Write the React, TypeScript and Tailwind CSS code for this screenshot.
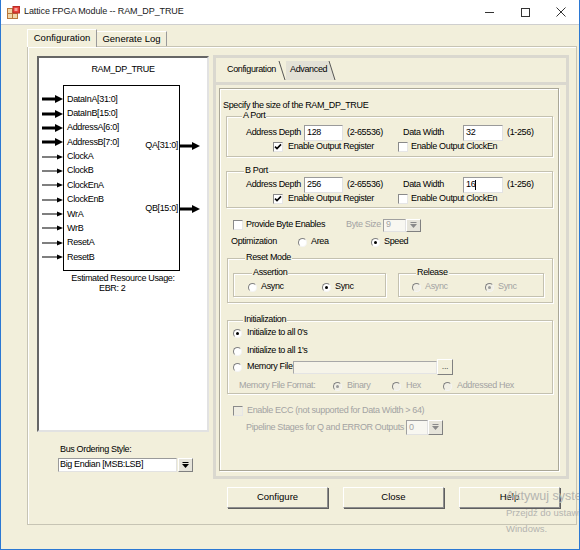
import React from 'react';

const BG = 'bg-[#f2efdb]';

function Check({ checked = false, disabled = false }: { checked?: boolean; disabled?: boolean }) {
  return (
    <span className={`w-[10px] h-[10px] shrink-0 border border-t-[#8a8a8a] border-l-[#8a8a8a] border-b-[#e6e6e6] border-r-[#e6e6e6] flex items-center justify-center ${disabled ? 'bg-[#efede2]' : 'bg-white'}`}>
      {checked && (
        <svg width="8" height="8" viewBox="0 0 8 8">
          <path d="M1 3.6 L3 5.6 L7 1.4" stroke="#000" strokeWidth="1.6" fill="none" />
        </svg>
      )}
    </span>
  );
}

function Radio({ on = false, disabled = false }: { on?: boolean; disabled?: boolean }) {
  return (
    <span className={`w-[9px] h-[9px] shrink-0 rounded-full border border-t-[#808080] border-l-[#808080] border-b-[#f4f4f4] border-r-[#f4f4f4] flex items-center justify-center ${disabled ? 'bg-[#f1efe4]' : 'bg-white'}`}>
      {on && <span className={`w-[3px] h-[3px] rounded-full ${disabled ? 'bg-[#9a9a9a]' : 'bg-black'}`} />}
    </span>
  );
}

function DropBtn({ disabled = false }: { disabled?: boolean }) {
  const c = disabled ? '#8a8a8a' : '#000';
  return (
    <span className="w-[15px] h-full shrink-0 bg-[#e6e4da] border border-t-white border-l-white border-r-[#808080] border-b-[#808080] flex items-center justify-center">
      <svg width="9" height="7" viewBox="0 0 9 7">
        <path d="M1.5 0.5 H7.5" stroke={c} strokeWidth="1" />
        <path d="M1 2 L8 2 L4.5 6 Z" fill={c} />
      </svg>
    </span>
  );
}

function GroupBox({ title, left = 16, className = '', children }: { title: string; left?: number; className?: string; children?: React.ReactNode }) {
  return (
    <div className={`relative shrink-0 border border-[#c4c1b0] shadow-[inset_1px_1px_0_#fff,1px_1px_0_#fff] ${className}`}>
      <span
        className={`absolute top-[-7px] px-[1px] leading-[11px] ${BG} ${left === 18 ? 'left-[17px]' : left === 19 ? 'left-[18px]' : 'left-[15px]'}`}
      >
        {title}
      </span>
      {children}
    </div>
  );
}

function PinArrow({ bus }: { bus: boolean }) {
  return bus ? (
    <svg width="21" height="9" viewBox="0 0 21 9" className="block">
      <rect x="0" y="3" width="15" height="3" fill="#000" />
      <path d="M13 0.5 L21 4.5 L13 8.5 Z" fill="#000" />
    </svg>
  ) : (
    <svg width="21" height="9" viewBox="0 0 21 9" className="block">
      <rect x="0" y="4" width="16" height="1" fill="#000" />
      <path d="M15 2 L21 4.5 L15 7 Z" fill="#000" />
    </svg>
  );
}

const PINS: [string, boolean][] = [
  ['DataInA[31:0]', true],
  ['DataInB[15:0]', true],
  ['AddressA[6:0]', true],
  ['AddressB[7:0]', true],
  ['ClockA', false],
  ['ClockB', false],
  ['ClockEnA', false],
  ['ClockEnB', false],
  ['WrA', false],
  ['WrB', false],
  ['ResetA', false],
  ['ResetB', false],
];

function PortGroup({ title, depth, width, top, caret }: { title: string; depth: string; width: string; top: 'a' | 'b'; caret?: boolean }) {
  return (
    <GroupBox title={title} left={top === 'a' ? 16 : 18} className={`ml-[6px] w-[327px] ${top === 'a' ? 'mt-[5px] h-[41px] pt-[8px]' : 'mt-[14px] h-[37px] pt-[5px]'}`}>
      <div className="h-[16px] flex items-center pl-[19px]">
        <span className="w-[58px] shrink-0">Address Depth</span>
        <span className="w-[39px] h-[16px] shrink-0 bg-white border border-t-[#9a9a9a] border-l-[#9a9a9a] border-b-[#e2e2e2] border-r-[#e2e2e2] flex items-center pl-[2px]">{depth}</span>
        <span className="ml-[4px] w-[56px] shrink-0">(2-65536)</span>
        <span className="w-[60px] shrink-0">Data Width</span>
        <span className="w-[40px] h-[16px] shrink-0 bg-white border border-t-[#9a9a9a] border-l-[#9a9a9a] border-b-[#e2e2e2] border-r-[#e2e2e2] flex items-center pl-[2px]">
          {width}
          {caret && <span className="w-[1px] h-[10px] bg-black" />}
        </span>
        <span className="ml-[4px]">(1-256)</span>
      </div>
      <div className="h-[12px] flex items-center pl-[46px]">
        <span className="w-[125px] shrink-0 flex items-center">
          <Check checked />
          <span className="ml-[5px]">Enable Output Register</span>
        </span>
        <Check />
        <span className="ml-[3px]">Enable Output ClockEn</span>
      </div>
    </GroupBox>
  );
}

export default function App() {
  const dim = 'text-[#a3a3a3]';
  return (
    <div className={`w-[580px] h-[550px] relative overflow-hidden flex flex-col ${BG} border-x border-b border-[#2b78d3] font-['Liberation_Sans',Arial,sans-serif] text-black`}>
      {/* title bar */}
      <div className="h-[25px] shrink-0 bg-white border-b border-[#cfcfcf] flex items-center">
        <svg width="13" height="13" viewBox="0 0 13 13" className="ml-[6px] shrink-0">
          <rect x="0.5" y="2.5" width="10" height="10" fill="#f1d6a8" stroke="#b9773a" />
          <path d="M5.5 2.5 V12.5 M0.5 7.5 H10.5" stroke="#b9773a" />
          <rect x="6" y="0.5" width="6.5" height="6.5" fill="#e8413a" stroke="#b92d26" />
          <rect x="7.5" y="2" width="3" height="3" fill="#f7a19b" />
        </svg>
        <span className="ml-[4px] text-[9px] tracking-[-0.1px] text-[#1a1a1a]">Lattice FPGA Module -- RAM_DP_TRUE</span>
        <div className="flex-1" />
        <div className="w-[36px] h-full flex items-center justify-center">
          <span className="w-[9px] h-[1px] bg-[#333]" />
        </div>
        <div className="w-[36px] h-full flex items-center justify-center">
          <span className="w-[9px] h-[9px] border border-[#333]" />
        </div>
        <div className="w-[36px] h-full flex items-center justify-center">
          <svg width="10" height="10" viewBox="0 0 10 10">
            <path d="M0.5 0.5 L9.5 9.5 M9.5 0.5 L0.5 9.5" stroke="#333" strokeWidth="1" />
          </svg>
        </div>
      </div>

      {/* body */}
      <div className="pl-[26px] pt-[4px]">
        <div className="h-[17px] flex items-end text-[9.5px]">
          <div className={`relative z-10 -mb-px h-[18px] w-[70px] ${BG} border-t border-l border-white border-r border-r-[#9a9a9a] flex items-center justify-center`}>
            Configuration
          </div>
          <div className="h-[15px] w-[70px] border-t border-t-white border-r border-r-[#9a9a9a] flex items-center justify-center pt-[1px]">
            Generate Log
          </div>
        </div>

        <div className="w-[550px] h-[479px] border border-[#c7c4b4] shadow-[inset_1px_1px_0_#fff] flex flex-col text-[9px] tracking-[-0.35px]">
          <div className="flex items-start pt-[8px] pl-[9px]">
            {/* left column */}
            <div className="w-[172px] mt-[1px] shrink-0 flex flex-col">
              <div className="h-[376px] bg-white border-2 border-t-[#666] border-l-[#666] border-r-[#e2e2e2] border-b-[#e2e2e2] flex flex-col">
                <div className="pt-[6px] leading-[11px] text-center">RAM_DP_TRUE</div>
                <div className="relative mt-[10px] ml-[24px] w-[117px] h-[186px] border border-black pt-[6px]">
                  {PINS.map(([name, bus]) => (
                    <div key={name} className="relative h-[14.36px] flex items-center pl-[3px] leading-none">
                      <span className="absolute left-[-22px] top-1/2 -translate-y-1/2">
                        <PinArrow bus={bus} />
                      </span>
                      {name}
                    </div>
                  ))}
                  <div className="absolute right-[1px] top-[54px] h-[12px] flex items-center">
                    QA[31:0]
                    <span className="absolute left-full ml-[1px] top-1/2 -translate-y-1/2">
                      <PinArrow bus />
                    </span>
                  </div>
                  <div className="absolute right-[1px] top-[117px] h-[12px] flex items-center">
                    QB[15:0]
                    <span className="absolute left-full ml-[1px] top-1/2 -translate-y-1/2">
                      <PinArrow bus />
                    </span>
                  </div>
                </div>
                <div className="mt-[2px] leading-[10px]">
                  <div className="text-center">Estimated Resource Usage:</div>
                  <div className="pl-[60px]">EBR: 2</div>
                </div>
              </div>
              <div className="mt-[12px] pl-[23px] leading-[11px]">Bus Ordering Style:</div>
              <div className="mt-[3px] pl-[21px] h-[14px] flex">
                <span className="w-[119px] h-full bg-white border border-t-[#9a9a9a] border-l-[#9a9a9a] border-b-[#e2e2e2] border-r-[#e2e2e2] flex items-center pl-[1px]">
                  Big Endian [MSB:LSB]
                </span>
                <span className="ml-[1px] h-full flex">
                  <DropBtn />
                </span>
              </div>
            </div>

            {/* right frame */}
            <div className="ml-[4px] w-[356px] h-[424px] shrink-0 border-[3px] border-[#dad8cf] flex flex-col">
              <div className="h-[27px] shrink-0 border-b-[3px] border-[#dad8cf] flex items-center pl-[11px]">
                <span>Configuration</span>
                <svg width="8" height="19" viewBox="0 0 8 19" className="ml-[2px] shrink-0">
                  <path d="M1 0 L7 19" stroke="#555" strokeWidth="1" />
                </svg>
                <span className="h-[19px] flex items-center bg-[#e3e1d6] pl-[4px] pr-[1px]">Advanced</span>
                <svg width="8" height="19" viewBox="0 0 8 19" className="shrink-0">
                  <path d="M0 19 L0 0 L7 19 Z" fill="#e3e1d6" />
                  <path d="M1 0 L7 19" stroke="#555" strokeWidth="1" />
                </svg>
              </div>

              <div className="mt-[3px] ml-[3px] w-[340px] h-[383px] border border-[#aaa797] shadow-[inset_1px_1px_0_#fff,1px_1px_0_#fff] flex flex-col">
                <div className="mt-[11px] pl-[3px] leading-[11px]">Specify the size of the RAM_DP_TRUE</div>

                <PortGroup title="A Port" depth="128" width="32" top="a" />
                <PortGroup title="B Port" depth="256" width="16" top="b" caret />

                <div className="mt-[10px] h-[14px] flex items-center pl-[13px]">
                  <span className="w-[113px] shrink-0 flex items-center">
                    <Check />
                    <span className="ml-[3px]">Provide Byte Enables</span>
                  </span>
                  <span className={`w-[37px] shrink-0 ${dim}`}>Byte Size</span>
                  <span className={`w-[23px] h-[13px] shrink-0 bg-[#f8f7f1] border border-t-[#a0a0a0] border-l-[#a0a0a0] border-b-[#e2e2e2] border-r-[#e2e2e2] flex items-center pl-[2px] ${dim}`}>9</span>
                  <span className="h-[13px] flex">
                    <DropBtn disabled />
                  </span>
                </div>

                <div className="mt-[4px] h-[12px] flex items-center pl-[11px]">
                  <span className="w-[67px] shrink-0">Optimization</span>
                  <span className="w-[73px] shrink-0 flex items-center">
                    <Radio />
                    <span className="ml-[4px]">Area</span>
                  </span>
                  <Radio on />
                  <span className="ml-[4px]">Speed</span>
                </div>

                <GroupBox title="Reset Mode" left={18} className="mt-[10px] ml-[7px] w-[326px] h-[45px] flex items-start pt-[14px] pl-[5px]">
                  <GroupBox title="Assertion" left={19} className="w-[153px] h-[24px] pt-[7px] pl-[14px]">
                    <div className="h-[12px] flex items-center">
                      <span className="w-[74px] shrink-0 flex items-center">
                        <Radio />
                        <span className="ml-[4px]">Async</span>
                      </span>
                      <Radio on />
                      <span className="ml-[4px]">Sync</span>
                    </div>
                  </GroupBox>
                  <GroupBox title="Release" left={18} className="ml-[12px] w-[146px] h-[24px] pt-[7px] pl-[13px]">
                    <div className={`h-[12px] flex items-center ${dim}`}>
                      <span className="w-[73px] shrink-0 flex items-center">
                        <Radio disabled />
                        <span className="ml-[4px]">Async</span>
                      </span>
                      <Radio on disabled />
                      <span className="ml-[4px]">Sync</span>
                    </div>
                  </GroupBox>
                </GroupBox>

                <GroupBox title="Initialization" className="mt-[17px] ml-[7px] w-[326px] h-[74px] pt-[6px] pl-[5px] flex flex-col">
                  <div className="h-[12px] flex items-center">
                    <Radio on />
                    <span className="ml-[5px]">Initialize to all 0's</span>
                  </div>
                  <div className="mt-[6px] h-[12px] flex items-center">
                    <Radio />
                    <span className="ml-[5px]">Initialize to all 1's</span>
                  </div>
                  <div className="mt-[2px] h-[16px] flex items-center">
                    <Radio />
                    <span className="ml-[5px] w-[46px] shrink-0">Memory File</span>
                    <span className="w-[144px] h-[13px] shrink-0 bg-[#f6f4e9] border border-t-[#a8a8a8] border-l-[#a8a8a8] border-b-[#e4e4e4] border-r-[#e4e4e4]" />
                    <span className={`w-[16px] h-[16px] shrink-0 ${BG} border border-t-white border-l-white border-r-[#808080] border-b-[#808080] flex items-end justify-center pb-[3px] leading-none text-[#555]`}>...</span>
                  </div>
                  <div className={`mt-[5px] h-[12px] flex items-center pl-[6px] ${dim}`}>
                    <span className="w-[94px] shrink-0">Memory File Format:</span>
                    <span className="w-[59px] shrink-0 flex items-center">
                      <Radio on disabled />
                      <span className="ml-[5px]">Binary</span>
                    </span>
                    <span className="w-[51px] shrink-0 flex items-center">
                      <Radio disabled />
                      <span className="ml-[5px]">Hex</span>
                    </span>
                    <Radio disabled />
                    <span className="ml-[5px]">Addressed Hex</span>
                  </div>
                </GroupBox>

                <div className={`mt-[11px] h-[12px] flex items-center pl-[13px] ${dim}`}>
                  <Check disabled />
                  <span className="ml-[4px]">Enable ECC (not supported for Data Width &gt; 64)</span>
                </div>
                <div className={`mt-[3px] h-[15px] flex items-center pl-[26px] ${dim}`}>
                  <span className="w-[160px] shrink-0">Pipeline Stages for Q and ERROR Outputs</span>
                  <span className="w-[22px] h-[15px] shrink-0 bg-[#f8f7f1] border border-t-[#a0a0a0] border-l-[#a0a0a0] border-b-[#e2e2e2] border-r-[#e2e2e2] flex items-center pl-[2px]">0</span>
                  <span className="h-[15px] flex">
                    <DropBtn disabled />
                  </span>
                </div>
              </div>
            </div>
          </div>

          {/* buttons */}
          <div className="mt-[8px] pl-[199px] flex gap-[15px] text-[9.5px] tracking-normal">
            {['Configure', 'Close', 'Help'].map((b) => (
              <button
                key={b}
                className={`w-[101px] h-[21px] ${BG} border border-t-white border-l-white border-r-[#8e8e8e] border-b-[#8e8e8e] shadow-[1px_1px_0_#5f5f5f] flex items-center justify-center`}
              >
                {b}
              </button>
            ))}
          </div>
        </div>
      </div>

      {/* activation watermark */}
      <div className="absolute left-[505px] top-[488px] whitespace-nowrap text-[#b4b4b0] pointer-events-none">
        <div className="text-[12.5px] leading-[17px]">Aktywuj system Windows</div>
        <div className="text-[9.5px] leading-[16px]">Przejdź do ustawień, aby aktywować system</div>
        <div className="text-[9.5px] leading-[16px]">Windows.</div>
      </div>
    </div>
  );
}
